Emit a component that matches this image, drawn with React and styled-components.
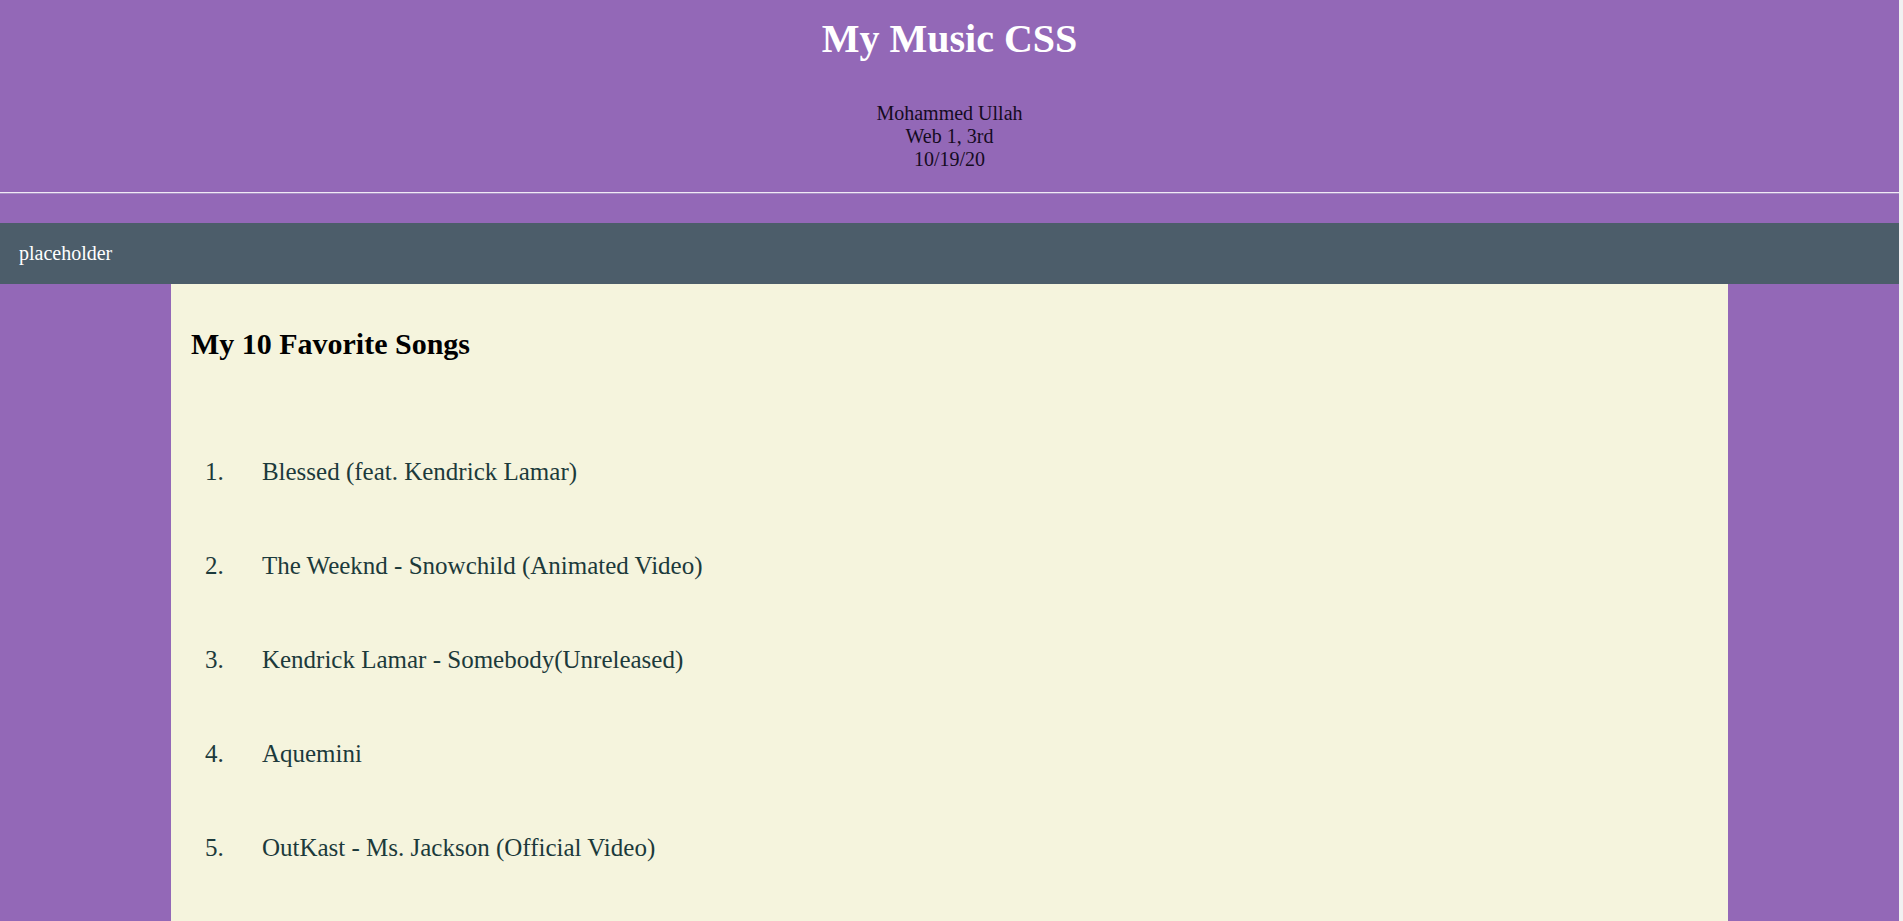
import React from "react";
import styled, { createGlobalStyle } from "styled-components";

const GlobalStyle = createGlobalStyle`
  html {
    margin: 0;
    padding: 0;
    background: #f1f1f1;
  }
  body {
    margin: 0 4px 0 0;
    padding: 0;
    background: #9368b7;
    font-family: "Liberation Serif", "Times New Roman", serif;
  }
  ::-webkit-scrollbar {
    width: 4px;
  }
  ::-webkit-scrollbar-track {
    background: #f1f1f1;
  }
  ::-webkit-scrollbar-thumb {
    background: #c1c1c1;
  }
`;

const Header = styled.header`
  text-align: center;
  padding-top: 16px;
`;

const Title = styled.h1`
  margin: 0;
  font-size: 40px;
  line-height: 46px;
  font-weight: bold;
  color: #ffffff;
`;

const Byline = styled.div`
  margin-top: 40px;
  font-size: 20px;
  line-height: 23px;
  color: #150b1f;
`;

const Divider = styled.hr`
  margin: 21px 0 0;
  height: 0;
  border: none;
  border-top: 1px solid #f1e9f6;
  border-bottom: 1px solid #a890c4;
`;

const Nav = styled.nav`
  margin-top: 29px;
  height: 61px;
  background: #4c5d6a;
  display: flex;
  align-items: center;
  padding-left: 19px;
  font-size: 20px;
  line-height: 23px;
  color: #ffffff;
`;

const Content = styled.main`
  box-sizing: border-box;
  width: 82%;
  margin: 0 auto;
  min-height: 2573px;
  padding: 0 20px;
  background: #f5f4dd;
  overflow: hidden;
`;

const Heading = styled.h2`
  margin: 43px 0 0;
  font-size: 30px;
  line-height: 34.5px;
  font-weight: bold;
  color: #000000;
`;

const SongList = styled.ol`
  list-style: none;
  margin: 95px 0 0;
  padding: 0 0 0 14px;
  display: flex;
  flex-direction: column;
  gap: 65px;
`;

const Song = styled.li`
  display: flex;
  font-size: 25px;
  line-height: 29px;
  color: #1c3a3b;
`;

const Num = styled.span`
  width: 57px;
  flex: none;
`;

const songs = [
  "Blessed (feat. Kendrick Lamar)",
  "The Weeknd - Snowchild (Animated Video)",
  "Kendrick Lamar - Somebody(Unreleased)",
  "Aquemini",
  "OutKast - Ms. Jackson (Official Video)",
];

export default function App() {
  return (
    <>
      <GlobalStyle />
      <Header>
        <Title>My Music CSS</Title>
        <Byline>
          Mohammed Ullah
          <br />
          Web 1, 3rd
          <br />
          10/19/20
        </Byline>
      </Header>
      <Divider />
      <Nav>placeholder</Nav>
      <Content>
        <Heading>My 10 Favorite Songs</Heading>
        <SongList>
          {songs.map((s, i) => (
            <Song key={s}>
              <Num>{i + 1}.</Num>
              <span>{s}</span>
            </Song>
          ))}
        </SongList>
      </Content>
    </>
  );
}
